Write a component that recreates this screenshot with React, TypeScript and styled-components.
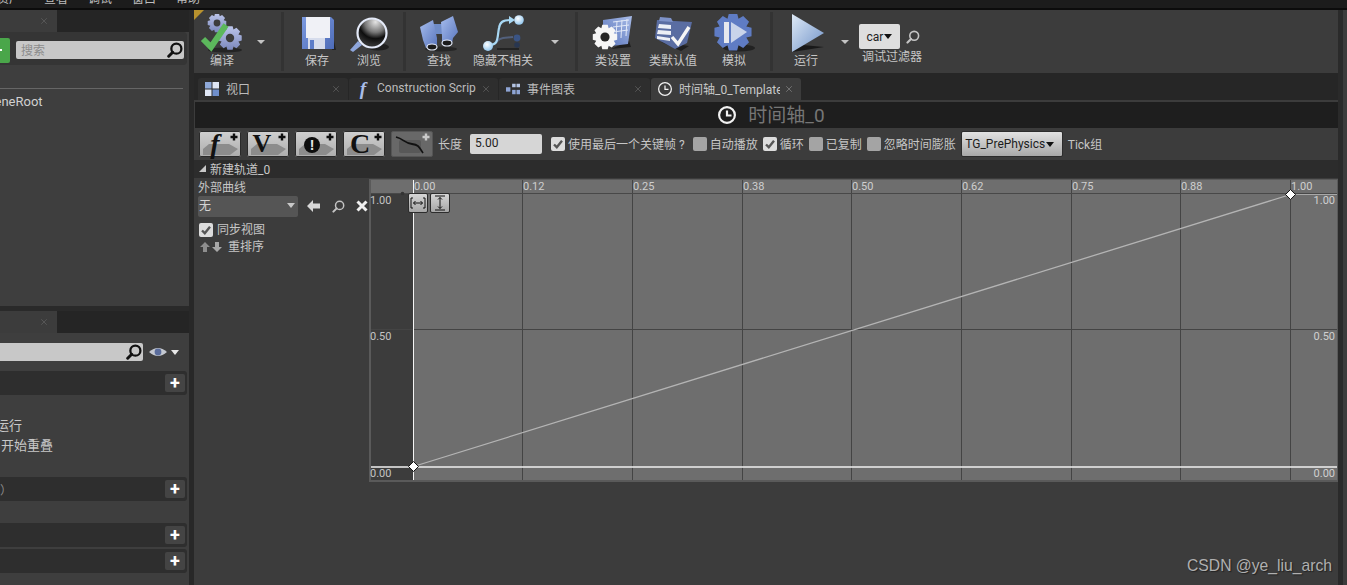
import styled, { createGlobalStyle } from 'styled-components';
import { X } from 'lucide-react';

const GlobalStyle = createGlobalStyle`
  html, body { margin: 0; padding: 0; background: #3c3c3c; }
  body { font-family: Roboto, "Noto Sans CJK SC", sans-serif; font-size: 12px; color: #c4c4c4; }
`;

const gearPath = (cx: number, cy: number, r: number, teeth: number) => {
  const pts: string[] = [];
  const step = (Math.PI * 2) / teeth;
  for (let i = 0; i < teeth; i++) {
    const a = i * step;
    const rows: [number, number][] = [
      [r * 0.76, -0.5],
      [r, -0.28],
      [r, 0.28],
      [r * 0.76, 0.5],
    ];
    rows.forEach(([rad, off]) => {
      const t = a + off * step;
      pts.push(`${(cx + Math.cos(t) * rad).toFixed(2)},${(cy + Math.sin(t) * rad).toFixed(2)}`);
    });
  }
  return `M${pts.join('L')}Z`;
};

const CompileIcon = () => (
  <svg width="44" height="40" viewBox="0 0 44 40">
    <defs>
      <linearGradient id="gearBlue" x1="0" y1="0" x2="0" y2="1">
        <stop offset="0" stopColor="#bcc5ea" />
        <stop offset="1" stopColor="#7b88bd" />
      </linearGradient>
    </defs>
    <ellipse cx="25" cy="36" rx="17" ry="2.5" fill="#242424" />
    <path d={gearPath(17, 9, 9.5, 8)} fill="url(#gearBlue)" />
    <circle cx="17" cy="9" r="3.4" fill="#3c3c3c" />
    <path d={gearPath(30, 24, 12, 8)} fill="url(#gearBlue)" />
    <circle cx="30" cy="24" r="4.2" fill="#3c3c3c" />
    <path d="M3 25 L11 33 L26 11" fill="none" stroke="#5cb85c" strokeWidth="6" />
  </svg>
);

const SaveIcon = () => (
  <svg width="44" height="40" viewBox="0 0 44 40">
    <defs>
      <linearGradient id="diskBlue" x1="0" y1="0" x2="1" y2="1">
        <stop offset="0" stopColor="#7c9ae0" />
        <stop offset="1" stopColor="#4e6cb8" />
      </linearGradient>
    </defs>
    <path d="M12 36 L41 36 L39 27 L37 36 Z" fill="#222" />
    <path d="M7 3 H36 L39 6 V35 H7 Z" fill="url(#diskBlue)" />
    <rect x="11" y="3" width="24" height="21" fill="#f0f1f6" />
    <rect x="13" y="24" width="17" height="11" fill="#d6dcec" />
    <rect x="15" y="26" width="4" height="9" fill="#5c7cc8" />
  </svg>
);

const BrowseIcon = () => (
  <svg width="44" height="40" viewBox="0 0 44 40">
    <defs>
      <radialGradient id="glass" cx="0.62" cy="0.12" r="0.8">
        <stop offset="0" stopColor="#e4e4e4" />
        <stop offset="0.45" stopColor="#777" />
        <stop offset="0.72" stopColor="#0e0e0e" />
        <stop offset="1" stopColor="#303030" />
      </radialGradient>
    </defs>
    <ellipse cx="31" cy="33" rx="11" ry="3.5" fill="#1f1f1f" />
    <path d="M11 27 L15 31 L6 38 L3 36 Z" fill="#8ea6dc" />
    <circle cx="25" cy="19" r="14.5" fill="url(#glass)" stroke="#e4eaf8" strokeWidth="2.2" />
  </svg>
);

const FindIcon = () => (
  <svg width="44" height="40" viewBox="0 0 44 40">
    <defs>
      <linearGradient id="barrel" x1="0" y1="0" x2="1" y2="1">
        <stop offset="0" stopColor="#a6bdee" />
        <stop offset="1" stopColor="#5975bc" />
      </linearGradient>
    </defs>
    <ellipse cx="24" cy="35" rx="16" ry="2.5" fill="#262626" />
    <rect x="16" y="10" width="11" height="10" fill="#6f8cc8" />
    <path d="M3 13 L16 6 L20 24 L20 31 L9 34 L6 26 Z" fill="url(#barrel)" />
    <path d="M24 8 L36 2 L41 18 L36 24 L35 29 L25 31 L25 22 Z" fill="url(#barrel)" />
    <ellipse cx="15" cy="33" rx="5" ry="3" fill="#1b1b1b" stroke="#e2e8f6" strokeWidth="1.2" />
    <ellipse cx="30" cy="29" rx="5" ry="3" fill="#1b1b1b" stroke="#e2e8f6" strokeWidth="1.2" />
  </svg>
);

const HideIcon = () => (
  <svg width="44" height="40" viewBox="0 0 44 40">
    <defs>
      <radialGradient id="nodeLight" cx="0.4" cy="0.35" r="0.7">
        <stop offset="0" stopColor="#ffffff" />
        <stop offset="1" stopColor="#8cc4ee" />
      </radialGradient>
    </defs>
    <rect x="16" y="34" width="22" height="2" fill="#232323" />
    <path d="M8 31 C18 31 14 25 22 24 L32 23" fill="none" stroke="#52607c" strokeWidth="2" />
    <path d="M8 31 C18 31 16 24 18 14 C19 8 22 6 29 6" fill="none" stroke="#a8d8f4" strokeWidth="2.2" />
    <path d="M28 2 L34 6 L28 10 Z" fill="#a8d8f4" />
    <circle cx="38" cy="6" r="4.8" fill="url(#nodeLight)" />
    <circle cx="7" cy="32" r="5" fill="url(#nodeLight)" />
    <circle cx="36" cy="24" r="3.4" fill="#3a5484" />
    <circle cx="36" cy="31" r="2.8" fill="#283650" />
  </svg>
);

const ClassSettingsIcon = () => (
  <svg width="44" height="40" viewBox="0 0 44 40">
    <defs>
      <linearGradient id="sheet" x1="0" y1="1" x2="1" y2="0">
        <stop offset="0" stopColor="#5470b8" />
        <stop offset="1" stopColor="#a9bce8" />
      </linearGradient>
    </defs>
    <path d="M20 35 L40 33 L38 27 Z" fill="#1f1f1f" />
    <path d="M12 6 L41 2 L37 30 L12 33 Z" fill="url(#sheet)" />
    <path
      d="M22 8 L38 6 M22 13 L38 11 M22 18 L37 16 M26 7 L25 24 M31 6 L30 24 M36 5 L35 22"
      stroke="#e2e9f8"
      strokeWidth="1"
      fill="none"
    />
    <path d={gearPath(14, 23, 12.5, 8)} fill="#f6f6f6" />
    <circle cx="14" cy="23" r="4.6" fill="#262626" />
  </svg>
);

const DefaultsIcon = () => (
  <svg width="44" height="40" viewBox="0 0 44 40">
    <path d="M10 28 L30 37 L38 32 Z" fill="#1f1f1f" />
    <path d="M6 6 L41 8 L36 29 L24 35 L4 24 Z" fill="#5a6da2" />
    <path d="M9 3 L20 4 L22 8 L8 7 Z" fill="#7e92c8" />
    <path d="M8 10 L20 11 V15 L7 14 Z M7 16 L20 17 V21 L6 20 Z M6 22 L19 24 V27 L6 25 Z" fill="#eceff6" />
    <path d="M21 23 L27 30 L38 13" fill="none" stroke="#f6f6f6" strokeWidth="3.4" />
  </svg>
);

const SimulateIcon = () => (
  <svg width="44" height="40" viewBox="0 0 44 40">
    <ellipse cx="27" cy="34" rx="16" ry="3.5" fill="#222" />
    <path d={gearPath(21, 18, 19, 8)} fill="#5f7cc4" />
    <rect x="12" y="8" width="5" height="21" fill="#e6e8ee" />
    <path d="M19 8 L35 18 L19 29 Z" fill="#c9d4ea" />
  </svg>
);

const PlayIcon = () => (
  <svg width="44" height="40" viewBox="0 0 44 40">
    <defs>
      <linearGradient id="playFill" x1="0" y1="0" x2="1" y2="1">
        <stop offset="0" stopColor="#dfeaf6" />
        <stop offset="1" stopColor="#6f92c8" />
      </linearGradient>
    </defs>
    <path d="M8 38 L8 30 L40 33 Z" fill="#191919" />
    <path d="M8 0 L40 19 L8 38 Z" fill="url(#playFill)" />
  </svg>
);

const SearchGlyph = ({ size = 14, color = '#111', stroke = 2 }: { size?: number; color?: string; stroke?: number }) => (
  <svg width={size} height={size} viewBox="0 0 14 14">
    <circle cx="8.2" cy="5.8" r="4.4" fill="none" stroke={color} strokeWidth={stroke} />
    <path d="M5 9 L1.5 12.5" stroke={color} strokeWidth={stroke + 0.6} strokeLinecap="round" />
  </svg>
);

const CheckGlyph = () => (
  <svg width="14" height="14" viewBox="0 0 14 14">
    <path d="M3 7.5 L5.8 10.2 L11 3.8" fill="none" stroke="#555" strokeWidth="2.4" />
  </svg>
);

const ClockGlyph = ({ size, stroke }: { size: number; stroke: number }) => (
  <svg width={size} height={size} viewBox="0 0 18 18">
    <circle cx="9" cy="9" r={9 - stroke / 2} fill="none" stroke="#f2f2f2" strokeWidth={stroke} />
    <path d="M9 4.5 V9.5 H13.5" fill="none" stroke="#f2f2f2" strokeWidth={stroke} />
  </svg>
);

const Page = styled.div`
  position: relative;
  width: 1347px;
  height: 585px;
  overflow: hidden;
  display: flex;
  flex-direction: column;
  background: #2a2a2a;
`;

const MenuBar = styled.div`
  height: 8px;
  flex: none;
  display: flex;
  gap: 20px;
  padding-left: 45px;
  background: #1c1c1c;
  border-bottom: 2px solid #0c0c0c;
  overflow: hidden;
`;

const MenuText = styled.span`
  margin-top: -8px;
  line-height: 14px;
  font-size: 12px;
  color: #bdbdbd;
`;

const FirstMenuText = styled(MenuText)`
  margin-left: -48px;
  margin-right: 3px;
`;

const Body = styled.div`
  flex: 1;
  display: flex;
  min-height: 0;
`;

const LeftColumn = styled.div`
  width: 189px;
  flex: none;
  display: flex;
  flex-direction: column;
  gap: 5px;
  overflow: hidden;
`;

const Gutter = styled.div`
  width: 5px;
  flex: none;
  background: #282828;
`;

const SidePanel = styled.div<{ $h: number }>`
  height: ${(p) => p.$h}px;
  flex: none;
  display: flex;
  flex-direction: column;
  overflow: hidden;
  background: #3e3e3e;
`;

const TabStrip = styled.div`
  height: 22px;
  flex: none;
  display: flex;
  background: #252525;
`;

const SideTab = styled.div`
  width: 57px;
  display: flex;
  align-items: center;
  justify-content: flex-end;
  padding-right: 8px;
  box-sizing: border-box;
  background: #3c3c3c;
`;

const CloseIcon = styled(X)<{ $light?: boolean }>`
  width: 10px;
  height: 10px;
  flex: none;
  color: ${(p) => (p.$light ? '#7c7c7c' : '#5c5c5c')};
`;

const SearchRow = styled.div`
  height: 33px;
  flex: none;
  display: flex;
  align-items: center;
  gap: 6px;
  margin-right: 2px;
  padding: 3px 3px 0 0;
  box-sizing: border-box;
  background: #353535;
  border-radius: 0 4px 4px 0;
`;

const GreenButton = styled.div`
  width: 10px;
  height: 25px;
  flex: none;
  display: flex;
  align-items: center;
  background: #4aa64a;
  border-radius: 0 2px 2px 0;
  &::before {
    content: '';
    width: 2px;
    height: 2px;
    background: #fff;
  }
`;

const SearchBox = styled.div`
  flex: 1;
  height: 18px;
  display: flex;
  align-items: center;
  justify-content: space-between;
  padding: 0 1px 0 5px;
  box-sizing: border-box;
  background: #c8c8c8;
  color: #8c8c8c;
  border-radius: 2px;
`;

const SearchHint = styled.span`
  margin-top: -2px;
`;

const Divider = styled.div`
  height: 1px;
  margin: 23px 6px 0 0;
  background: #666;
`;

const RootLabel = styled.div`
  margin: 5px 0 0 -20px;
  line-height: 16px;
  font-size: 13px;
  color: #d0d0d0;
`;

const LowerSearch = styled.div`
  height: 38px;
  flex: none;
  display: flex;
  align-items: center;
  gap: 6px;
`;

const LowerBox = styled.div`
  width: 143px;
  height: 18px;
  flex: none;
  display: flex;
  align-items: center;
  justify-content: flex-end;
  padding-right: 1px;
  box-sizing: border-box;
  background: #c8c8c8;
  border-radius: 0 2px 2px 0;
`;

const SectionHead = styled.div<{ $mt: number }>`
  height: 24px;
  flex: none;
  display: flex;
  align-items: center;
  justify-content: space-between;
  margin: ${(p) => p.$mt}px 2px 0 0;
  padding-right: 2px;
  background: #2e2e2e;
  border-radius: 0 3px 3px 0;
  color: #8a8a8a;
`;

const PlusBtn = styled.div`
  width: 20px;
  height: 18px;
  display: flex;
  align-items: center;
  justify-content: center;
  background: #444;
  border-radius: 2px;
  color: #fff;
  font-size: 18px;
  font-weight: 700;
  line-height: 18px;
`;

const EventText = styled.div<{ $ml: number; $mt: number }>`
  margin: ${(p) => p.$mt}px 0 0 ${(p) => p.$ml}px;
  line-height: 16px;
  font-size: 13px;
  color: #c8c8c8;
  white-space: nowrap;
`;

const Main = styled.div`
  width: 1144px;
  flex: none;
  display: flex;
  flex-direction: column;
`;

const RightGutter = styled.div`
  width: 5px;
  flex: none;
  background: #2a2a2a;
`;

const RightEdge = styled.div`
  flex: 1;
  background: #3c3c3c;
`;

const Toolbar = styled.div`
  position: relative;
  height: 63px;
  flex: none;
  display: flex;
  background: #3c3c3c;
`;

const CornerMark = styled.div`
  position: absolute;
  left: 0;
  top: 0;
  width: 0;
  height: 0;
  border-top: 10px solid #b8922e;
  border-right: 10px solid transparent;
`;

const ToolGroup = styled.div<{ $w: number; $pl?: number }>`
  width: ${(p) => p.$w}px;
  flex: none;
  display: flex;
  padding-left: ${(p) => p.$pl ?? 0}px;
  box-sizing: border-box;
`;

const ToolSep = styled.div`
  width: 3px;
  height: 59px;
  margin-top: 2px;
  flex: none;
  background: #333;
`;

const ToolBtn = styled.div<{ $w: number }>`
  width: ${(p) => p.$w}px;
  flex: none;
  display: flex;
  flex-direction: column;
  align-items: center;
  padding-top: 4px;
  svg { display: block; }
`;

const ToolLabel = styled.span`
  line-height: 14px;
  white-space: nowrap;
  color: #c6c6c6;
`;

const ToolArrow = styled.div<{ $w: number }>`
  width: ${(p) => p.$w}px;
  flex: none;
  display: flex;
  justify-content: center;
  padding-top: 30px;
  &::after {
    content: '';
    width: 0;
    height: 0;
    border-left: 4px solid transparent;
    border-right: 4px solid transparent;
    border-top: 4px solid #c4c4c4;
  }
`;

const DebugFilter = styled.div`
  width: 76px;
  flex: none;
  display: flex;
  flex-direction: column;
  padding: 14px 0 0 5px;
  box-sizing: border-box;
`;

const DebugRow = styled.div`
  display: flex;
  align-items: center;
  gap: 6px;
`;

const DebugCombo = styled.div`
  width: 41px;
  height: 25px;
  display: flex;
  align-items: center;
  justify-content: center;
  gap: 1px;
  background: #dedede;
  border-radius: 2px;
  color: #222;
`;

const DebugLabel = styled.span`
  margin: 1px 0 0 3px;
  line-height: 14px;
  white-space: nowrap;
  color: #c6c6c6;
`;

const ComboCaret = styled.span<{ $ml?: number }>`
  width: 0;
  height: 0;
  flex: none;
  margin-left: ${(p) => p.$ml ?? 0}px;
  border-left: 4.5px solid transparent;
  border-right: 4.5px solid transparent;
  border-top: 5px solid ${(p) => p.color ?? '#111'};
`;

const DocTabs = styled.div`
  height: 22px;
  padding-top: 5px;
  flex: none;
  display: flex;
  gap: 1px;
  padding-left: 4px;
  background: #262626;
`;

const DocTab = styled.div<{ $w: number; $active?: boolean }>`
  width: ${(p) => p.$w}px;
  flex: none;
  display: flex;
  align-items: center;
  gap: 7px;
  padding: 0 7px;
  box-sizing: border-box;
  background: ${(p) => (p.$active ? '#3c3c3c' : '#2e2e2e')};
  border-radius: 3px 3px 0 0;
  color: ${(p) => (p.$active ? '#c8c8c8' : '#bcbcbc')};
`;

const DocTabText = styled.span`
  flex: 1;
  min-width: 0;
  margin: -2px -3px 0 0;
  overflow: hidden;
  white-space: nowrap;
`;

const DocIcon = styled.svg`
  width: 14px;
  height: 14px;
  flex: none;
`;

const FnGlyph = styled.span`
  width: 14px;
  flex: none;
  text-align: center;
  font-family: "Liberation Serif", serif;
  font-style: italic;
  font-weight: 700;
  font-size: 19px;
  line-height: 18px;
  color: #a9bde8;
`;

const Content = styled.div`
  position: relative;
  flex: 1;
  display: flex;
  flex-direction: column;
  padding-top: 2px;
  background: #3c3c3c;
`;

const TitleBar = styled.div`
  height: 26px;
  flex: none;
  display: flex;
  align-items: center;
  justify-content: center;
  gap: 12px;
  padding: 0 0 1px 10px;
  box-sizing: border-box;
  margin-left: 1px;
  background: #1e1e1e;
  font-size: 19px;
  color: #767676;
`;

const TitleText = styled.span`
  margin-top: -2px;
`;

const ActionBar = styled.div`
  height: 32px;
  flex: none;
  display: flex;
  align-items: center;
  padding-left: 5px;
`;

const AddBtn = styled.div<{ $off?: boolean }>`
  position: relative;
  width: 42px;
  height: 26px;
  flex: none;
  margin-right: 6px;
  box-sizing: border-box;
  border: 1px solid ${(p) => (p.$off ? '#555' : '#e4e4e4')};
  outline: 1px solid ${(p) => (p.$off ? 'transparent' : '#2a2a2a')};
  outline-offset: -1px;
  border-radius: 2px;
  background: ${(p) => (p.$off ? '#686868' : 'linear-gradient(#cfcfcf, #aeaeae)')};
  svg { position: absolute; left: 0; top: 0; }
`;

const AddLetter = styled.span<{ $italic?: boolean; $cx: number; $size: number }>`
  position: absolute;
  left: ${(p) => p.$cx - 13}px;
  top: -1px;
  width: 24px;
  text-align: center;
  font-family: "Liberation Serif", serif;
  font-size: ${(p) => p.$size}px;
  line-height: 26px;
  font-weight: 700;
  font-style: ${(p) => (p.$italic ? 'italic' : 'normal')};
  color: #111;
`;

const AlertBadge = styled.span`
  position: absolute;
  left: 8px;
  top: 5px;
  width: 16px;
  height: 16px;
  border-radius: 50%;
  background: #0e0e0e;
  color: #e8e8e8;
  text-align: center;
  font-family: "Liberation Sans", sans-serif;
  font-size: 14px;
  font-weight: 700;
  line-height: 16px;
`;

const FieldLabel = styled.span<{ $ml?: number }>`
  margin: -2px 0 0 ${(p) => p.$ml ?? 0}px;
  white-space: nowrap;
  color: #c6c6c6;
`;

const LengthInput = styled.div`
  width: 72px;
  height: 20px;
  flex: none;
  margin-left: 8px;
  padding-left: 5px;
  box-sizing: border-box;
  line-height: 19px;
  background: #d6d6d6;
  border-radius: 2px;
  color: #222;
`;

const Check = styled.div<{ $on?: boolean; $ml?: number; $mr?: number }>`
  width: 14px;
  height: 14px;
  flex: none;
  margin: 0 ${(p) => p.$mr ?? 3}px 0 ${(p) => p.$ml ?? 0}px;
  border-radius: 2px;
  background: ${(p) => (p.$on ? '#dcdcdc' : '#a4a4a4')};
  svg { display: block; }
`;

const TickCombo = styled.div`
  width: 102px;
  height: 26px;
  flex: none;
  margin: 0 5px 0 5px;
  padding-right: 4px;
  display: flex;
  align-items: center;
  justify-content: center;
  gap: 1px;
  box-sizing: border-box;
  border: 1px solid #2c2c2c;
  border-radius: 2px;
  background: linear-gradient(#e2e2e2, #a8a8a8);
  color: #1c1c1c;
`;

const TrackHead = styled.div`
  height: 18px;
  flex: none;
  display: flex;
  align-items: center;
  gap: 4px;
  padding: 0 0 2px 5px;
  box-sizing: border-box;
  background: #2c2c2c;
  color: #c8c8c8;
`;

const Corner = styled.span`
  width: 0;
  height: 0;
  border-left: 7px solid transparent;
  border-bottom: 7px solid #c8c8c8;
`;

const TrackBody = styled.div`
  flex: none;
  display: flex;
`;

const TrackSide = styled.div`
  width: 175px;
  flex: none;
  display: flex;
  flex-direction: column;
  padding: 2px 0 0 4px;
  box-sizing: border-box;
`;

const SideLine = styled.div<{ $mt?: number }>`
  display: flex;
  align-items: center;
  margin-top: ${(p) => p.$mt ?? 0}px;
  line-height: 16px;
  color: #c6c6c6;
`;

const CurveCombo = styled.div`
  width: 100px;
  height: 21px;
  flex: none;
  display: flex;
  align-items: center;
  justify-content: space-between;
  padding: 0 3px 2px 1px;
  box-sizing: border-box;
  background: #555;
  border-radius: 2px;
  color: #d4d4d4;
`;

const CurveIcons = styled.div`
  display: flex;
  align-items: center;
  gap: 11px;
  margin: -1px 0 0 9px;
`;

const GraphFrame = styled.div`
  position: relative;
  width: 969px;
  height: 303px;
  flex: none;
  margin-top: 1px;
  svg { display: block; }
`;

const FitButtons = styled.div`
  position: absolute;
  left: 39px;
  top: 14px;
  display: flex;
  gap: 2px;
`;

const FitBtn = styled.div`
  width: 20px;
  height: 20px;
  display: flex;
  align-items: center;
  justify-content: center;
  box-sizing: border-box;
  border: 1px solid #2c2c2c;
  border-radius: 2px;
  background: linear-gradient(#d6d6d6, #a6a6a6);
`;

const Watermark = styled.div`
  position: absolute;
  right: 6px;
  bottom: 9px;
  font-family: "Liberation Sans", Arial, sans-serif;
  font-size: 15.7px;
  line-height: 20px;
  color: #b0b0b0;
  text-shadow: 1px 1px 1px #222;
`;

const gridX = [413, 522, 632, 742, 851, 961, 1071, 1180, 1290];
const gridLabels = ['0.00', '0.12', '0.25', '0.38', '0.50', '0.62', '0.75', '0.88', '1.00'];
const rows = [
  { y: 204, label: '1.00' },
  { y: 340, label: '0.50' },
  { y: 477, label: '0.00' },
];

const CurveGraph = () => (
  <svg width="969" height="303" viewBox="369 179 969 303" fontFamily="Roboto, sans-serif" fontSize="11">
    <rect x="369" y="179" width="969" height="303" fill="#5a5a5a" />
    <rect x="371" y="180" width="966" height="300" fill="#6e6e6e" />
    <rect x="371" y="194" width="42" height="286" fill="#3c3c3c" />
    {gridX.map((x) => (
      <line key={x} x1={x + 0.5} y1="180" x2={x + 0.5} y2="480" stroke="#444" />
    ))}
    <line x1="371" y1="193.5" x2="1337" y2="193.5" stroke="#484848" />
    <line x1="371" y1="329.5" x2="1337" y2="329.5" stroke="#444" />
    <line x1="1290" y1="194.5" x2="1337" y2="194.5" stroke="#a8a8a8" />
    <line x1="371" y1="467" x2="1337" y2="467" stroke="#f0f0f0" strokeWidth="1.6" />
    <line x1="413.5" y1="180" x2="413.5" y2="480" stroke="#f4f4f4" />
    <line x1="413.5" y1="466.5" x2="1290.5" y2="194.5" stroke="#b4b4b4" strokeWidth="1.3" />
    <circle cx="402.5" cy="193.5" r="1.8" fill="#333" />
    <path d="M413.5 461.5 L418.5 466.5 L413.5 471.5 L408.5 466.5 Z" fill="#fff" stroke="#111" />
    <path d="M1290.5 189.5 L1295.5 194.5 L1290.5 199.5 L1285.5 194.5 Z" fill="#fff" stroke="#111" />
    {gridX.map((x, i) => (
      <text key={x} x={x + 1} y="190" fill="#cfcfcf">
        {gridLabels[i]}
      </text>
    ))}
    {rows.map((r) => (
      <text key={`l${r.y}`} x="370" y={r.y} fill="#c4c4c4">
        {r.label}
      </text>
    ))}
    {rows.map((r) => (
      <text key={`r${r.y}`} x="1335" y={r.y} fill="#d0d0d0" textAnchor="end">
        {r.label}
      </text>
    ))}
  </svg>
);

const AddShape = ({ off }: { off?: boolean }) => (
  <svg width="40" height="24" viewBox="0 0 40 24">
    {off ? (
      <rect x="7" y="8" width="22" height="13" rx="2" fill="#585858" />
    ) : (
      <path d="M3 17 L9 12 H29 L38 17 L30 23 H3 Z" fill="#8c8c8c" />
    )}
    <path d="M30.5 5 H37.5 M34 1.5 V8.5" stroke={off ? '#c8c8c8' : '#0e0e0e'} strokeWidth="2.4" />
  </svg>
);

export default function App() {
  return (
    <>
      <GlobalStyle />
      <Page>
        <MenuBar>
          <FirstMenuText>资产</FirstMenuText>
          <MenuText>查看</MenuText>
          <MenuText>调试</MenuText>
          <MenuText>窗口</MenuText>
          <MenuText>帮助</MenuText>
        </MenuBar>
        <Body>
          <LeftColumn>
            <SidePanel $h={296}>
              <TabStrip>
                <SideTab>
                  <CloseIcon />
                </SideTab>
              </TabStrip>
              <SearchRow>
                <GreenButton />
                <SearchBox>
                  <SearchHint>搜索</SearchHint>
                  <SearchGlyph size={16} />
                </SearchBox>
              </SearchRow>
              <Divider />
              <RootLabel>SceneRoot</RootLabel>
            </SidePanel>
            <SidePanel $h={274}>
              <TabStrip>
                <SideTab>
                  <CloseIcon />
                </SideTab>
              </TabStrip>
              <LowerSearch>
                <LowerBox>
                  <SearchGlyph size={16} />
                </LowerBox>
                <svg width="18" height="10" viewBox="0 0 18 10">
                  <path d="M0 5 Q9 -3 18 5 Q9 13 0 5 Z" fill="#c4c8d0" />
                  <circle cx="9" cy="5" r="3.4" fill="#5a6c9c" />
                </svg>
                <ComboCaret color="#e8e8e8" $ml={-2} />
              </LowerSearch>
              <SectionHead $mt={0}>
                <span />
                <PlusBtn>+</PlusBtn>
              </SectionHead>
              <EventText $ml={-4} $mt={23}>
                运行
              </EventText>
              <EventText $ml={1} $mt={4}>
                开始重叠
              </EventText>
              <SectionHead $mt={23}>
                <span>）</span>
                <PlusBtn>+</PlusBtn>
              </SectionHead>
              <SectionHead $mt={22}>
                <span />
                <PlusBtn>+</PlusBtn>
              </SectionHead>
              <SectionHead $mt={2}>
                <span />
                <PlusBtn>+</PlusBtn>
              </SectionHead>
            </SidePanel>
          </LeftColumn>
          <Gutter />
          <Main>
            <Toolbar>
              <CornerMark />
              <ToolGroup $w={87}>
                <ToolBtn $w={56}>
                  <CompileIcon />
                  <ToolLabel>编译</ToolLabel>
                </ToolBtn>
                <ToolArrow $w={22} />
              </ToolGroup>
              <ToolSep />
              <ToolGroup $w={119} $pl={7}>
                <ToolBtn $w={52}>
                  <SaveIcon />
                  <ToolLabel>保存</ToolLabel>
                </ToolBtn>
                <ToolBtn $w={52}>
                  <BrowseIcon />
                  <ToolLabel>浏览</ToolLabel>
                </ToolBtn>
              </ToolGroup>
              <ToolSep />
              <ToolGroup $w={169} $pl={3}>
                <ToolBtn $w={60}>
                  <FindIcon />
                  <ToolLabel>查找</ToolLabel>
                </ToolBtn>
                <ToolBtn $w={68}>
                  <HideIcon />
                  <ToolLabel>隐藏不相关</ToolLabel>
                </ToolBtn>
                <ToolArrow $w={36} />
              </ToolGroup>
              <ToolSep />
              <ToolGroup $w={192} $pl={5}>
                <ToolBtn $w={60}>
                  <ClassSettingsIcon />
                  <ToolLabel>类设置</ToolLabel>
                </ToolBtn>
                <ToolBtn $w={60}>
                  <DefaultsIcon />
                  <ToolLabel>类默认值</ToolLabel>
                </ToolBtn>
                <ToolBtn $w={62}>
                  <SimulateIcon />
                  <ToolLabel>模拟</ToolLabel>
                </ToolBtn>
              </ToolGroup>
              <ToolSep />
              <ToolGroup $w={300} $pl={3}>
                <ToolBtn $w={60}>
                  <PlayIcon />
                  <ToolLabel>运行</ToolLabel>
                </ToolBtn>
                <ToolArrow $w={18} />
                <DebugFilter>
                  <DebugRow>
                    <DebugCombo>
                      car
                      <ComboCaret />
                    </DebugCombo>
                    <SearchGlyph size={14} color="#c4c4c4" stroke={1.6} />
                  </DebugRow>
                  <DebugLabel>调试过滤器</DebugLabel>
                </DebugFilter>
              </ToolGroup>
            </Toolbar>
            <DocTabs>
              <DocTab $w={150}>
                <DocIcon viewBox="0 0 14 14">
                  <rect x="0" y="0" width="6.5" height="6.5" fill="#8ea8d8" />
                  <rect x="7.5" y="0" width="6.5" height="6.5" fill="#dfe6f4" />
                  <rect x="0" y="7.5" width="6.5" height="6.5" fill="#dfe6f4" />
                  <rect x="7.5" y="7.5" width="6.5" height="6.5" fill="#6f8fcc" />
                </DocIcon>
                <DocTabText>视口</DocTabText>
                <CloseIcon />
              </DocTab>
              <DocTab $w={149}>
                <FnGlyph>f</FnGlyph>
                <DocTabText>Construction Scrip</DocTabText>
                <CloseIcon />
              </DocTab>
              <DocTab $w={151}>
                <DocIcon viewBox="0 0 16 14">
                  <rect x="7" y="1" width="4" height="4" fill="#b4c4e4" />
                  <rect x="12" y="1" width="4" height="4" fill="#b4c4e4" />
                  <rect x="0" y="5" width="5" height="5" fill="#8ea4d4" />
                  <rect x="7" y="8" width="4" height="5" fill="#8ea4d4" />
                  <rect x="12" y="8" width="4" height="5" fill="#8ea4d4" />
                </DocIcon>
                <DocTabText>事件图表</DocTabText>
                <CloseIcon />
              </DocTab>
              <DocTab $w={150} $active>
                <ClockGlyph size={14} stroke={1.6} />
                <DocTabText>时间轴_0_Template</DocTabText>
                <CloseIcon $light />
              </DocTab>
            </DocTabs>
            <Content>
              <TitleBar>
                <ClockGlyph size={18} stroke={2.2} />
                <TitleText>时间轴_0</TitleText>
              </TitleBar>
              <ActionBar>
                <AddBtn>
                  <AddShape />
                  <AddLetter $italic $cx={16} $size={28}>
                    f
                  </AddLetter>
                </AddBtn>
                <AddBtn>
                  <AddShape />
                  <AddLetter $cx={15} $size={26}>
                    V
                  </AddLetter>
                </AddBtn>
                <AddBtn>
                  <AddShape />
                  <AlertBadge>!</AlertBadge>
                </AddBtn>
                <AddBtn>
                  <AddShape />
                  <AddLetter $cx={17} $size={28}>
                    C
                  </AddLetter>
                </AddBtn>
                <AddBtn $off>
                  <AddShape off />
                  <svg width="40" height="24" viewBox="0 0 40 24">
                    <path d="M4 5 C12 7 12 11 20 12 C27 13 27 15 31 21" fill="none" stroke="#111" strokeWidth="1.8" />
                  </svg>
                </AddBtn>
                <FieldLabel $ml={-1}>长度</FieldLabel>
                <LengthInput>5.00</LengthInput>
                <Check $on $ml={9}>
                  <CheckGlyph />
                </Check>
                <FieldLabel>使用最后一个关键帧 ?</FieldLabel>
                <Check $ml={8} />
                <FieldLabel>自动播放</FieldLabel>
                <Check $on $ml={5}>
                  <CheckGlyph />
                </Check>
                <FieldLabel>循环</FieldLabel>
                <Check $ml={5} />
                <FieldLabel>已复制</FieldLabel>
                <Check $ml={5} />
                <FieldLabel>忽略时间膨胀</FieldLabel>
                <TickCombo>
                  TG_PrePhysics
                  <ComboCaret />
                </TickCombo>
                <FieldLabel>Tick组</FieldLabel>
              </ActionBar>
              <TrackHead>
                <Corner />
                新建轨道_0
              </TrackHead>
              <TrackBody>
                <TrackSide>
                  <SideLine>外部曲线</SideLine>
                  <SideLine>
                    <CurveCombo>
                      无
                      <ComboCaret color="#c8c8c8" />
                    </CurveCombo>
                    <CurveIcons>
                      <svg width="14" height="12" viewBox="0 0 14 12">
                        <path d="M0 6 L6 0 V3.5 H13 V8.5 H6 V12 Z" fill="#d8d8d8" />
                      </svg>
                      <SearchGlyph size={13} color="#c4c4c4" stroke={1.6} />
                      <svg width="12" height="12" viewBox="0 0 12 12">
                        <path d="M1.5 1.5 L10.5 10.5 M10.5 1.5 L1.5 10.5" stroke="#f0f0f0" strokeWidth="3" />
                      </svg>
                    </CurveIcons>
                  </SideLine>
                  <SideLine $mt={5}>
                    <Check $on $ml={1} $mr={4}>
                      <CheckGlyph />
                    </Check>
                    同步视图
                  </SideLine>
                  <SideLine $mt={1}>
                    <svg width="30" height="12" viewBox="0 0 30 12">
                      <path d="M2 6 L7 1 L12 6 H9 V11 H5 V6 Z" fill="#8e8e8e" />
                      <path d="M14 6 L19 11 L24 6 H21 V1 H17 V6 Z" fill="#a8a8a8" />
                    </svg>
                    重排序
                  </SideLine>
                </TrackSide>
                <GraphFrame>
                  <CurveGraph />
                  <FitButtons>
                    <FitBtn>
                      <svg width="16" height="12" viewBox="0 0 16 12">
                        <path
                          d="M3 1 H1 V11 H3 M13 1 H15 V11 H13 M3.5 6 H12.5 M5.5 4 L3.5 6 L5.5 8 M10.5 4 L12.5 6 L10.5 8"
                          fill="none"
                          stroke="#111"
                          strokeWidth="1"
                        />
                      </svg>
                    </FitBtn>
                    <FitBtn>
                      <svg width="12" height="16" viewBox="0 0 12 16">
                        <path
                          d="M1 1 H11 M1 15 H11 M6 2.5 V13.5 M4 4.5 L6 2.5 L8 4.5 M4 11.5 L6 13.5 L8 11.5"
                          fill="none"
                          stroke="#111"
                          strokeWidth="1"
                        />
                      </svg>
                    </FitBtn>
                  </FitButtons>
                </GraphFrame>
              </TrackBody>
              <Watermark>CSDN @ye_liu_arch</Watermark>
            </Content>
          </Main>
          <RightGutter />
          <RightEdge />
        </Body>
      </Page>
    </>
  );
}
